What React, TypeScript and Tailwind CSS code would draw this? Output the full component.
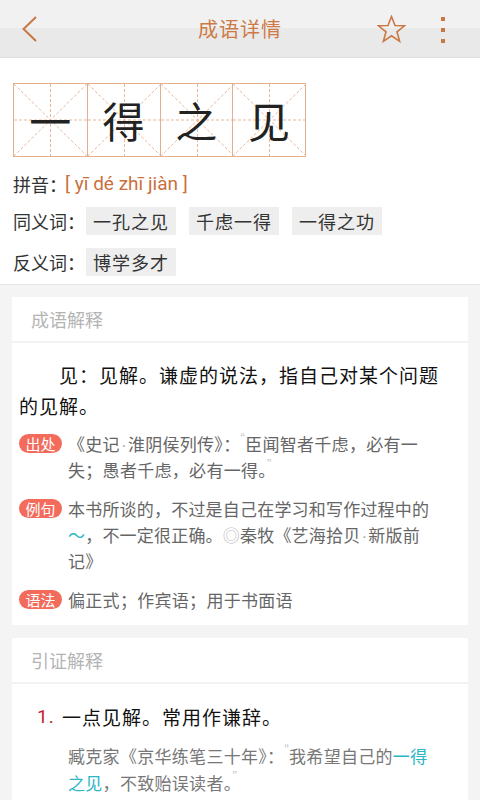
import React from "react";

const orange = "#c97745";

function GridCell({ ch }: { ch: string }) {
  return (
    <div className="relative w-[73px] h-[72px] flex items-center justify-center">
      <svg className="absolute inset-0" width="73" height="72" viewBox="0 0 73 72">
        <line x1="0" y1="0" x2="73" y2="72" stroke="#eab79a" strokeWidth="1" strokeDasharray="3 2" />
        <line x1="73" y1="0" x2="0" y2="72" stroke="#eab79a" strokeWidth="1" strokeDasharray="3 2" />
        <line x1="36.5" y1="0" x2="36.5" y2="72" stroke="#eab79a" strokeWidth="1" strokeDasharray="3 2" />
        <line x1="0" y1="36" x2="73" y2="36" stroke="#eab79a" strokeWidth="1" strokeDasharray="3 2" />
      </svg>
      <span className="relative text-[42px] leading-none text-[#222] font-['Noto_Sans_CJK_SC',sans-serif]">{ch}</span>
    </div>
  );
}

function Tag({ children }: { children: React.ReactNode }) {
  return (
    <span className="h-[28px] px-[7px] bg-[#eeeeee] text-[#333] text-[18px] flex items-center tracking-[1px]">
      {children}
    </span>
  );
}

function Pill({ children }: { children: React.ReactNode }) {
  return (
    <span className="shrink-0 mt-[3px] w-[43px] h-[19px] rounded-full bg-[#f36b5b] text-white text-[15px] leading-none flex items-center justify-center">
      {children}
    </span>
  );
}

function Q({ children }: { children: React.ReactNode }) {
  return <span className="font-['Liberation_Sans',sans-serif] text-[#c8c8c8] text-[13px] leading-none align-top">{children}</span>;
}

function Dot() {
  return <span className="font-['Liberation_Sans',sans-serif] text-[#aaa] leading-none px-[1px]">·</span>;
}

export default function App() {
  return (
    <div className="w-[480px] min-h-[800px] bg-[#f4f4f4] font-['Noto_Sans_CJK_SC',sans-serif]">
      {/* top bar */}
      <div className="h-[58px] bg-[linear-gradient(#f1f1f1_50%,#e9e9e9_50%)] border-b border-[#dddddd] grid grid-cols-[1fr_auto_1fr] items-center">
        <div className="h-full flex items-center pl-[22px]">
          <svg width="16" height="26" viewBox="0 0 16 26">
            <polyline points="14,1 1.5,13 14,25" fill="none" stroke={orange} strokeWidth="2" />
          </svg>
        </div>
        <div className="text-center text-[20px] tracking-[1px] text-[#cd7a46]">成语详情</div>
        <div className="h-full flex items-center justify-end">
          <svg width="29" height="28" viewBox="0 0 29 28">
            <polygon
              points="14.5,1.5 18,10.5 27.5,10.8 20,16.8 22.6,26.3 14.5,20.8 6.4,26.3 9,16.8 1.5,10.8 11,10.5"
              fill="none"
              stroke={orange}
              strokeWidth="1.6"
              strokeLinejoin="miter"
            />
          </svg>
          <div className="w-[74px] h-full flex flex-col items-center justify-center gap-[7px] pt-[2px]">
            <span className="w-[4px] h-[4px] bg-[#c97745]" />
            <span className="w-[4px] h-[4px] bg-[#c97745]" />
            <span className="w-[4px] h-[4px] bg-[#c97745]" />
          </div>
        </div>
      </div>

      {/* head info */}
      <div className="bg-white pt-[25px] pb-[8px] px-[13px] border-b border-[#e4e4e4]">
        <div className="flex w-[293px] border border-[#e3af8e] [&>*+*]:border-l [&>*+*]:border-[#e3af8e]">
          <GridCell ch="一" />
          <GridCell ch="得" />
          <GridCell ch="之" />
          <GridCell ch="见" />
        </div>
        <div className="mt-[12px] h-[30px] flex items-center text-[18px] text-[#333]">
          <span>拼音：</span>
          <span className="-ml-[2px] font-['Roboto',sans-serif] text-[19px] text-[#c9703c]">[ yī dé zhī jiàn ]</span>
        </div>
        <div className="mt-[8px] flex items-center gap-[13px] text-[18px] text-[#333]">
          <span className="-mr-[12px]">同义词：</span>
          <Tag>一孔之见</Tag>
          <Tag>千虑一得</Tag>
          <Tag>一得之功</Tag>
        </div>
        <div className="mt-[13px] flex items-center gap-[13px] text-[18px] text-[#333]">
          <span className="-mr-[12px]">反义词：</span>
          <Tag>博学多才</Tag>
        </div>
      </div>

      {/* cards */}
      <div className="px-[12px] pt-[12px] flex flex-col gap-[13px]">
        <div className="bg-white">
          <div className="h-[46px] flex items-center pl-[19px] text-[18px] text-[#b4b4b4] border-b-2 border-[#f2f2f2]">
            成语解释
          </div>
          <div className="pl-[7px] pr-[19px] pt-[16px] pb-[12px]">
            <p className="text-[19px] leading-[31px] tracking-[1px] text-[#111] indent-[40px]">
              见：见解。谦虚的说法，指自己对某个问题的见解。
            </p>
            <div className="mt-[10px] flex flex-col gap-[13px] text-[17px] leading-[26px] text-[#666]">
              <div className="flex gap-[6px]">
                <Pill>出处</Pill>
                <div className="tracking-[0.3px]">
                  《史记<Dot />淮阴侯列传》：<Q>“</Q>臣闻智者千虑，必有一
                  <br />
                  失；愚者千虑，必有一得。<Q>”</Q>
                </div>
              </div>
              <div className="flex gap-[6px]">
                <Pill>例句</Pill>
                <div className="tracking-[0.2px]">
                  本书所谈的，不过是自己在学习和写作过程中的
                  <br />
                  <span className="text-[#2bb6c6]">～</span>，不一定很正确。<span className="text-[#c0c0c0]">◎</span>秦牧《艺海拾贝<Dot />新版前
                  <br />
                  记》
                </div>
              </div>
              <div className="flex gap-[6px]">
                <Pill>语法</Pill>
                <div className="tracking-[0.3px]">偏正式；作宾语；用于书面语</div>
              </div>
            </div>
          </div>
        </div>

        <div className="bg-white">
          <div className="h-[46px] flex items-center pl-[19px] text-[18px] text-[#b4b4b4] border-b-2 border-[#f2f2f2]">
            引证解释
          </div>
          <div className="pl-[25px] pr-[19px] pt-[17px] pb-[14px]">
            <div className="flex items-center text-[19px] leading-[31px] tracking-[1px] text-[#111]">
              <span className="w-[25px] text-[#c0202a] font-['Roboto',sans-serif]">1.</span>
              <span>一点见解。常用作谦辞。</span>
            </div>
            <div className="mt-[10px] pl-[31px] text-[17px] leading-[27px] text-[#777] tracking-[0.3px]">
              臧克家《京华练笔三十年》：<Q>“</Q>我希望自己的<span className="text-[#2bb6c6]">一得</span>
              <br />
              <span className="text-[#2bb6c6]">之见</span>，不致贻误读者。<Q>”</Q>
            </div>
          </div>
        </div>
      </div>
    </div>
  );
}
